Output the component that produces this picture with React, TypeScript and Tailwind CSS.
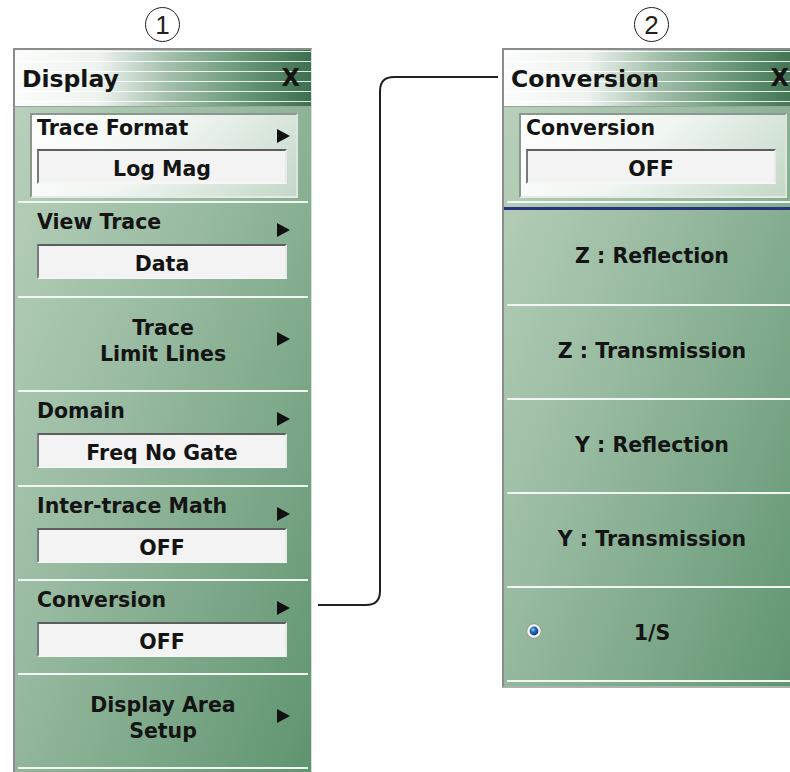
import React from "react";

// small black "submenu" triangle
const Arrow = () => (
  <svg width="13" height="14" viewBox="0 0 13 14" className="block shrink-0">
    <path d="M0 0 L13 7 L0 14 Z" fill="#111111" />
  </svg>
);

const Radio = () => (
  <svg width="16" height="16" viewBox="0 0 16 16" className="block">
    <defs>
      <radialGradient id="radioDot" cx="40%" cy="35%" r="65%">
        <stop offset="0" stopColor="#8fcaf5" />
        <stop offset="0.45" stopColor="#1d6cbb" />
        <stop offset="1" stopColor="#0b3a74" />
      </radialGradient>
    </defs>
    <circle cx="8" cy="8" r="7.3" fill="#f3f5f4" stroke="#9aa29c" strokeWidth="1.2" />
    <circle cx="8" cy="8" r="4.4" fill="url(#radioDot)" />
  </svg>
);

const Callout = ({ n }: { n: string }) => (
  <div className="h-[48px] flex justify-center pt-[7px]">
    <div className="w-[35px] h-[35px] rounded-full border-[1.5px] border-[#231f20] flex items-center justify-center text-[26px] leading-none text-[#231f20] [font-family:'Liberation_Sans',Arial,sans-serif]">
      {n}
    </div>
  </div>
);

const ValueBox = ({ value }: { value: string }) => (
  <div className="h-[35px] flex items-center justify-center pt-[5px] border-2 border-t-[#5c5e5d] border-l-[#77797a] border-r-[#e7ebe8] border-b-[#f4f6f4] bg-[#f3f3f3] text-[20.5px] font-bold leading-none">
    {value}
  </div>
);

const TitleBar = ({ title }: { title: string }) => (
  <div className="h-[57px] flex items-center justify-between pl-[7px] pr-[11px] pt-[3px] border-b border-[#98a39a] bg-[repeating-linear-gradient(180deg,transparent_0px,transparent_1px,rgba(255,255,255,0.85)_1px,rgba(255,255,255,0.85)_2.5px,transparent_2.5px,transparent_10px),linear-gradient(90deg,#fbfcfb_0%,#eef3ef_28%,#a3bfab_52%,#6b9a7a_76%,#3d7050_100%)]">
    <span className="text-[23.5px] font-bold leading-none">{title}</span>
    <span className="text-[24px] font-bold leading-none mb-[3px]">X</span>
  </div>
);

// the highlighted (current) entry at the top of each menu
const FrameItem = ({ label, value, arrow, h }: { label: string; value: string; arrow?: boolean; h: string }) => (
  <div className={`${h} mx-[3px] border-b-2 border-[#f3f7f3] pt-[6px] pl-[12px] pr-[10px]`}>
    <div className="border-2 border-t-[#8b968d] border-l-[#8b968d] border-r-[#dce6de] border-b-[#e3ebe5] bg-[linear-gradient(135deg,#ffffff_0%,#f1f6f2_45%,#c4d8c8_100%)] pt-[2px] pl-[5px] pr-[9px] pb-[12px]">
      <div className="flex justify-between h-[26px]">
        <span className="text-[20.5px] font-bold leading-[22px]">{label}</span>
        {arrow && (
          <span className="mt-[12px] -mr-[3px]">
            <Arrow />
          </span>
        )}
      </div>
      <div className="mt-[6px]">
        <ValueBox value={value} />
      </div>
    </div>
  </div>
);

const LabeledItem = ({ label, value, h }: { label: string; value: string; h: string }) => (
  <div className={`${h} mx-[3px] border-b-2 border-[#f3f7f3] pt-[8px] pl-[19px] pr-[21px]`}>
    <div className="flex justify-between h-[26px]">
      <span className="text-[20.5px] font-bold leading-[22px]">{label}</span>
      <span className="mt-[12px] -mr-[3px]">
        <Arrow />
      </span>
    </div>
    <div className="mt-[7px]">
      <ValueBox value={value} />
    </div>
  </div>
);

const SubmenuItem = ({ lines, h }: { lines: string[]; h: string }) => (
  <div className={`${h} mx-[3px] border-b-2 border-[#f3f7f3] grid grid-cols-[1fr_auto_1fr] items-center pb-[6px]`}>
    <div />
    <div className="text-center text-[20.5px] font-bold leading-[26px]">
      {lines.map((l) => (
        <div key={l}>{l}</div>
      ))}
    </div>
    <div className="justify-self-end mr-[18px] mb-[4px]">
      <Arrow />
    </div>
  </div>
);

const OptionItem = ({ label, h, selected }: { label: string; h: string; selected?: boolean }) => (
  <div className={`${h} mx-[3px] border-b-2 border-[#f3f7f3] grid grid-cols-[1fr_auto_1fr] items-center pb-[2px]`}>
    <div className="pl-[19px] mb-[4px]">{selected && <Radio />}</div>
    <div className="text-[20.5px] font-bold leading-[24px]">{label}</div>
    <div />
  </div>
);

const bodyBg =
  "bg-[linear-gradient(112deg,#b9d0bb_0%,#9abca3_38%,#84ad8f_62%,#5f9470_100%)]";

export default function App() {
  return (
    <div className="w-[790px] h-[772px] overflow-hidden bg-white flex text-[#141414] [font-family:'DejaVu_Sans',Verdana,sans-serif]">
      {/* 1: Display menu */}
      <div className="ml-[13px] w-[299px] shrink-0 flex flex-col">
        <Callout n="1" />
        <div className="flex-1 flex flex-col border-t-2 border-l-2 border-r border-t-[#8c8c8c] border-l-[#8c8c8c] border-r-[#d6dfd8]">
          <TitleBar title="Display" />
          <div className={`flex-1 ${bodyBg}`}>
            <FrameItem h="h-[96px]" label="Trace Format" value="Log Mag" arrow />
            <LabeledItem h="h-[95px]" label="View Trace" value="Data" />
            <SubmenuItem h="h-[94px]" lines={["Trace", "Limit Lines"]} />
            <LabeledItem h="h-[95px]" label="Domain" value="Freq No Gate" />
            <LabeledItem h="h-[94px]" label="Inter-trace Math" value="OFF" />
            <LabeledItem h="h-[94px]" label="Conversion" value="OFF" />
            <SubmenuItem h="h-[94px]" lines={["Display Area", "Setup"]} />
          </div>
        </div>
      </div>

      {/* leader line from Conversion to its submenu */}
      <svg width="190" height="772" className="shrink-0 block">
        <path
          d="M6 605 H54 Q68 605 68 591 V91 Q68 77 82 77 H186"
          fill="none"
          stroke="#231f20"
          strokeWidth="2"
        />
      </svg>

      {/* 2: Conversion submenu */}
      <div className="w-[299px] shrink-0 flex flex-col">
        <Callout n="2" />
        <div className="flex flex-col border-t-2 border-l-2 border-r border-b-2 border-t-[#8c8c8c] border-l-[#8c8c8c] border-r-[#d6dfd8] border-b-[#a9b3ab]">
          <TitleBar title="Conversion" />
          <div className={bodyBg}>
            <FrameItem h="h-[96px]" label="Conversion" value="OFF" />
            <div className="h-[4px]" />
            <div className="h-[3px] bg-[#27337f]" />
            <OptionItem h="h-[96px]" label="Z : Reflection" />
            <OptionItem h="h-[94px]" label="Z : Transmission" />
            <OptionItem h="h-[94px]" label="Y : Reflection" />
            <OptionItem h="h-[94px]" label="Y : Transmission" />
            <OptionItem h="h-[94px]" label="1/S" selected />
            <div className="h-[4px]" />
          </div>
        </div>
      </div>
    </div>
  );
}
